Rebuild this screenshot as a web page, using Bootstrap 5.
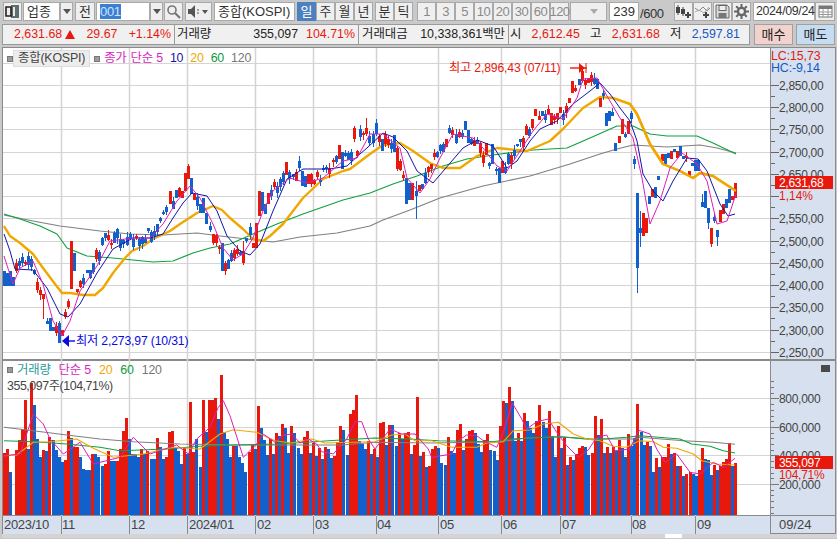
<!DOCTYPE html>
<html lang="ko">
<head>
<meta charset="utf-8">
<title>종합(KOSPI)</title>
<link href="https://cdn.jsdelivr.net/npm/bootstrap@5.3.0/dist/css/bootstrap.min.css" rel="stylesheet">
<style>
html,body{height:539px;overflow:hidden}
body{background:#c9c9c9;font-family:"Liberation Sans","Noto Sans CJK KR",sans-serif;font-size:12px;color:#222;line-height:1}
.tbar{height:24px;padding:2px 0 0 3px}
.tb{height:19px;border:1px solid #a9a9a9;border-radius:0;padding:0;background:#efefef;font-size:13px;line-height:15px;color:#333;display:flex;align-items:center;justify-content:center;flex:none}
.tbar .btn-group>.tb.tb:not(:first-child){margin-left:0}
.tb.off{color:#8a8a8a;letter-spacing:-.5px}
.tb.on{background:#4c80bf;color:#fff;border-color:#4c80bf}
.fld{height:19px;border:1px solid #a9a9a9;border-radius:0;padding:0 3px;background:#fff;font-size:13px;color:#333;flex:none;display:flex;align-items:center}
.dte{font-size:12.4px;letter-spacing:-.35px;padding:0 2px;white-space:nowrap}
.sel{background:#3b7fd0;color:#cfe2ff;padding:1px 0;letter-spacing:-.3px}
.arw{width:0;height:0;border-left:4px solid transparent;border-right:4px solid transparent;border-top:5px solid #555}
.arw.dim{border-top-color:#aaa}
.wd13{width:13px}.wd19{width:19px}.wd20{width:20px}.wd27{width:27px}.wd30{width:30px}.wd37{width:37px}.wd54{width:54px}.wd62{width:62px}.wd81{width:81px}
.mg1{margin-left:1px}.mg2{margin-left:2px}.mg4{margin-left:4px}.mg10{margin-left:10px}
.slash{width:24px;margin-left:1px;font-size:13px;color:#333;align-self:center;letter-spacing:-.4px}
.ibar{height:22px;padding-left:2px}
.ibox{width:748px;background:#f0f0f0;border:1px solid #9a9a9a;height:21px;align-items:center;font-size:12.4px}
.icell{height:100%;border-right:1px solid #9a9a9a;align-items:center;flex:none}
.ic1{width:172px;padding:0 3px 0 11px}
.ic2{width:184px;padding:0 3px 0 2px}
.ic3{width:150px;padding:0 3px 0 3px}
.ic4{flex:1;padding:0 9px 0 1px;display:flex;justify-content:space-between;border-right:0}
.red{color:#e8190c}.blu{color:#1458c8}
.tri{width:0;height:0;border-left:5px solid transparent;border-right:5px solid transparent;border-bottom:9px solid #e8190c;margin-left:3px}
.trade{width:39px;height:21px;font-size:13px;border:1px solid #a0a0a0;border-radius:0;padding:0;flex:none;color:#222;line-height:19px}
.buy{background:#f3d2cd;margin-left:4px}
.sell{background:#c6dcf1;margin-left:3px}
.trade:hover{color:#222}
.chartw{margin:1px 1px 0 2px;border:1px solid #8a8a8a;border-bottom:0}
.prow{display:flex}
.plot{position:relative;width:767px;background:#fff;flex:none}
.plot svg,.axs svg{display:block}
.axs{width:64px;background:#d6e0ee;border-left:1px solid #8a8a8a;flex:none;box-sizing:content-box;position:relative}
.hmain{height:313px}.hvol{height:155px}.hx{height:18px}
.rule{border-bottom:2px solid #8a8a8a}
.rule1{border-bottom:1px solid #8a8a8a}
.legd{position:absolute;left:4px;top:3px;height:15px;align-items:center;font-size:12.4px;letter-spacing:-.2px}
.sq{width:6px;height:6px;background:#9c9c9c;border:1px solid #777;display:block;flex:none}
.nmt{background:#ededed;border:1px solid #dcdcdc;padding:1px 4px;margin:0 4px 0 0;color:#444}
.c-mg{color:#d81ec0}.c-nv{color:#1414a8}.c-or{color:#f0a800}.c-gr{color:#0e9a3a}.c-gy{color:#777}.c-te{color:#2a9a9a}
.lg-sp{margin-left:7px}
.vleg{position:absolute;left:4px;top:3px;font-size:12.4px;letter-spacing:-.2px}
.vleg .lg-sp{margin-left:8px}
.vl2{margin:4px 0 0 0;color:#444;letter-spacing:-.45px}
.clo{position:absolute;right:5px;top:4px;width:9px;height:7px;background:#4a4a4a}
.tabs{height:4px;background:#d4d4d4;margin-left:2px}
.tabw{width:17px;height:4px;background:#fff;margin-left:663px}
text{font-family:"Liberation Sans","Noto Sans CJK KR",sans-serif}
</style>
</head>
<body>
<div class="d-flex tbar">
  <button class="btn tb wd19"><svg width="15" height="15" viewBox="0 0 15 15"><rect x="6" y="1" width="8" height="13" fill="#5e6e6e"/><path d="M1 3h5v9H1z" fill="none" stroke="#222" stroke-width="1.6"/><rect x="8" y="3" width="2" height="9" fill="#e8e8e8"/></svg></button>
  <div class="fld wd37 mg1">업종</div>
  <button class="btn tb wd13"><span class="arw"></span></button>
  <button class="btn tb wd20 mg2">전</button>
  <div class="fld wd54 mg1"><span class="sel">001</span></div>
  <button class="btn tb wd13"><span class="arw"></span></button>
  <button class="btn tb wd19 mg1"><svg width="15" height="15" viewBox="0 0 15 15"><circle cx="6" cy="6" r="4" fill="none" stroke="#777" stroke-width="1.6"/><path d="M9 9l5 5" stroke="#777" stroke-width="2.2"/></svg></button>
  <button class="btn tb wd27 mg2"><svg width="23" height="13" viewBox="0 0 23 13"><path d="M1 4h3l4-4v13l-4-4H1z" fill="#555"/><path d="M10 5h2M10 8h2" stroke="#555"/><path d="M15 5h6l-3 4z" fill="#555"/></svg></button>
  <div class="fld wd81 mg2">종합(KOSPI)</div>
  <div class="btn-group mg2" role="group">
    <button class="btn tb wd19 on">일</button><button class="btn tb wd19">주</button><button class="btn tb wd19">월</button><button class="btn tb wd19">년</button>
  </div>
  <div class="btn-group mg2" role="group">
    <button class="btn tb wd19">분</button><button class="btn tb wd19">틱</button>
  </div>
  <div class="btn-group mg4" role="group">
    <button class="btn tb wd19 off">1</button><button class="btn tb wd19 off">3</button><button class="btn tb wd19 off">5</button><button class="btn tb wd19 off">10</button><button class="btn tb wd19 off">20</button><button class="btn tb wd19 off">30</button><button class="btn tb wd19 off">60</button><button class="btn tb wd19 off">120</button>
  </div>
  <button class="btn tb wd37 mg1 justify-content-end pe-2"><span class="arw dim"></span></button>
  <div class="fld wd30 mg2 justify-content-end">239</div>
  <span class="slash">/600</span>
  <button class="btn tb wd19 mg10"><svg width="17" height="15" viewBox="0 0 17 15"><path d="M3 1v10M8 3v9" stroke="#444"/><rect x="1" y="3" width="4" height="6" fill="#444"/><rect x="6" y="5" width="4" height="5" fill="#444"/><path d="M13 8v6M10 11h6" stroke="#444" stroke-width="2"/></svg></button>
  <button class="btn tb wd19"><svg width="17" height="15" viewBox="0 0 17 15"><path d="M1 4l4 3 4-4 4 4 3-3" fill="none" stroke="#888"/><path d="M1 8l4-2 5 3 5-6" fill="none" stroke="#aaa"/><path d="M12 8v6M9 11h6" stroke="#444" stroke-width="2"/></svg></button>
  <button class="btn tb wd19 mg1"><svg width="15" height="15" viewBox="0 0 15 15"><path d="M1 1h11l2 2v11H1z" fill="#ddd" stroke="#666"/><rect x="4" y="1.5" width="7" height="5" fill="#eee" stroke="#666"/><rect x="3.5" y="9" width="8" height="5" fill="#777"/></svg></button>
  <button class="btn tb wd19"><svg width="15" height="15" viewBox="0 0 15 15"><circle cx="7.5" cy="7.5" r="3.6" fill="none" stroke="#666" stroke-width="2.4"/><path d="M7.5 0v3M7.5 12v3M0 7.5h3M12 7.5h3M2.2 2.2l2 2M10.8 10.8l2 2M2.2 12.8l2-2M10.8 4.200l2-2" stroke="#666" stroke-width="2"/></svg></button>
  <div class="fld wd62 mg2 dte">2024/09/24</div>
  <button class="btn tb wd20"><svg width="15" height="13" viewBox="0 0 15 13"><rect x="1" y="1" width="13" height="11" fill="#fff" stroke="#777"/><rect x="1" y="1" width="13" height="3" fill="#777"/><path d="M1 7h13M1 9.500h13M5 4v8M10 4v8" stroke="#999"/></svg></button>
</div>

<div class="d-flex ibar">
  <div class="d-flex ibox">
    <div class="d-flex icell ic1 justify-content-between"><span class="d-flex align-items-center red">2,631.68<i class="tri"></i></span><span class="red">29.67</span><span class="red">+1.14%</span></div>
    <div class="d-flex icell ic2"><span>거래량</span><span class="ms-auto">355,097</span><span class="red ms-2">104.71%</span></div>
    <div class="d-flex icell ic3"><span>거래대금</span><span class="ms-auto">10,338,361백만</span></div>
    <div class="d-flex icell ic4"><span>시</span><span class="red">2,612.45</span><span>고</span><span class="red">2,631.68</span><span>저</span><span class="blu">2,597.81</span></div>
  </div>
  <button class="btn trade buy">매수</button>
  <button class="btn trade sell">매도</button>
</div>

<div class="chartw">
  <div class="prow hmain rule">
    <div class="plot">
      <svg id="main" width="767" height="313" viewBox="3 47 767 313"></svg>
      <div class="d-flex legd"><i class="sq"></i><span class="nmt">종합(KOSPI)</span><i class="sq"></i><span class="c-mg ms-1">종가</span><span class="c-mg lg-sp ms-1">단순 5</span><span class="c-nv lg-sp">10</span><span class="c-or lg-sp">20</span><span class="c-gr lg-sp">60</span><span class="c-gy lg-sp">120</span></div>
    </div>
    <div class="axs"><svg id="maxis" width="64" height="313" viewBox="771 47 64 313"></svg></div>
  </div>
  <div class="prow hvol rule1">
    <div class="plot">
      <svg id="vol" width="767" height="155" viewBox="3 362 767 155"></svg>
      <div class="vleg"><div class="d-flex align-items-center"><i class="sq"></i><span class="c-te ms-1">거래량</span><span class="c-mg lg-sp">단순 5</span><span class="c-or lg-sp">20</span><span class="c-gr lg-sp">60</span><span class="c-gy lg-sp">120</span></div><div class="vl2">355,097주(104,71%)</div></div>
    </div>
    <div class="axs"><svg id="vaxis" width="64" height="155" viewBox="771 362 64 155"></svg><i class="clo"></i></div>
  </div>
  <div class="prow hx rule1">
    <div class="plot axbg"><svg id="xax" width="767" height="18" viewBox="3 518 767 18"></svg></div>
    <div class="axs"><svg width="64" height="18" viewBox="771 518 64 18"><text x="779" y="531" font-size="13" fill="#444">09/24</text></svg></div>
  </div>
</div>
<div class="tabs"><div class="tabw"></div></div>

<script>
const grid=[61,129,187,255,313,376,438,501,560,631,695];
const months=[[4,'2023/10'],[62,'11'],[131,'12'],[189,'2024/01'],[257,'02'],[315,'03'],[377,'04'],[440,'05'],[503,'06'],[562,'07'],[632,'08'],[697,'09']];
const priceY=p=>84+(2850-p)*0.4446;
const ma20=[[4,225],[10,235],[20,242],[33,253],[43,267],[55,283],[62,292],[70,292],[83,294],[95,294],[103,287],[113,272],[125,257],[132,250],[143,245],[153,238],[170,230],[180,223],[197,212],[213,205],[222,209],[230,217],[243,228],[253,238],[263,240],[270,235],[283,223],[303,197],[323,178],[343,170],[350,168],[370,153],[383,144],[400,142],[413,150],[430,162],[443,167],[460,167],[477,155],[497,147],[527,150],[550,140],[563,128],[583,107],[600,96],[613,97],[630,103],[637,113],[650,143],[663,163],[680,170],[693,177],[700,172],[713,175],[736,190]];
const ma10=[[4,233],[10,250],[15,268],[33,269],[47,287],[60,313],[68,316],[80,303],[97,272],[113,248],[133,237],[150,237],[163,233],[173,217],[183,202],[192,192],[207,195],[217,210],[227,235],[240,250],[250,254],[260,243],[273,210],[287,178],[303,168],[330,168],[347,165],[360,153],[367,147],[383,132],[393,136],[407,150],[417,170],[433,182],[463,147],[477,139],[493,145],[507,167],[517,160],[530,140],[540,128],[557,120],[573,103],[590,90],[600,82],[610,93],[620,107],[630,120],[637,140],[643,173],[653,190],[663,200],[673,180],[687,157],[698,158],[707,170],[720,203],[728,215],[735,213]];
const ma5=[[4,255],[13,283],[20,267],[33,260],[43,283],[53,320],[62,335],[70,320],[80,290],[97,265],[110,240],[133,237],[150,237],[163,223],[177,200],[190,185],[200,197],[213,223],[223,247],[233,259],[243,253],[253,237],[263,210],[273,190],[290,177],[307,182],[323,177],[343,160],[357,157],[370,133],[383,133],[400,147],[407,177],[420,192],[430,178],[440,157],[453,133],[473,137],[483,147],[497,165],[507,170],[520,150],[533,130],[547,113],[563,118],[577,97],[583,78],[597,77],[607,95],[620,117],[633,137],[642,177],[650,223],[660,200],[670,167],[682,152],[697,163],[707,180],[717,223],[727,220],[736,193]];
const ma60=[[4,213],[20,218],[40,225],[57,233],[67,247],[87,255],[113,257],[133,259],[153,261],[173,260],[193,252],[210,247],[230,243],[253,233],[277,223],[303,213],[343,199],[370,192],[393,183],[417,175],[443,165],[467,158],[500,153],[533,149],[567,147],[590,137],[617,125],[633,125],[650,133],[667,135],[697,135],[713,142],[736,153]];
const ma120=[[4,214],[33,220],[60,225],[100,230],[130,233],[163,234],[197,232],[220,235],[247,238],[273,241],[300,236],[337,232],[370,225],[383,219],[410,209],[440,197],[483,185],[530,175],[570,163],[600,153],[617,148],[633,144],[667,146],[700,144],[717,147],[736,152]];
const interp=(pl,x)=>{if(x<=pl[0][0])return pl[0][1];for(let i=1;i<pl.length;i++){if(x<=pl[i][0]){const a=pl[i-1],b=pl[i];return a[1]+(b[1]-a[1])*(x-a[0])/(b[0]-a[0]);}}return pl[pl.length-1][1];};
const pts=pl=>pl.map(p=>p.join(',')).join(' ');
const line=(pl,c,w)=>`<polyline points="${pts(pl)}" fill="none" stroke="${c}" stroke-width="${w}" stroke-linejoin="round"/>`;
const RED='#e8190c',BLUE='#1260cc',GRID='#d4d4d4';
let s=0x2F6E2B1;const rnd=()=>{s|=0;s=s+0x6D2B79F5|0;let t=Math.imul(s^s>>>15,1|s);t=t+Math.imul(t^t>>>7,61|t)^t;return((t^t>>>14)>>>0)/4294967296;};
const xOf=i=>Math.floor(3+3.075*i);
const N=239,cd=[];
for(let i=0;i<N;i++){const x=xOf(i)+1,c=interp(ma5,x+5)+(rnd()-.5)*11,h=2+rnd()*8;const up=rnd()<.5;
 cd.push({c:up?'r':'b',t:c-h/2,b:c+h/2,wt:c-h/2-rnd()*5,wb:c+h/2+rnd()*5});}
const ov=[[5,'b',270,285],[8,'b',272,285],[11,'b',270,285],[14,'b',276,285],[16,'r',262,270,258,272],[44,'r',293,298,293,318],[50,'b',317,330],[53,'b',326,330],[59,'b',322,342,320,342],[62,'r',329,335],[65,'r',311,316,308,318],[68,'r',300,306,298,308],[71,'r',240,288],[75,'b',252,270],[171,'r',190,203],[177,'b',189,197],[182,'r',190,197],[185,'r',172,190],[188,'r',165,178,163,178],[192,'b',177,193],[202,'b',203,212],[204,'b',197,212],[207,'b',212,223],[223,'b',242,270],[225,'r',262,270,260,274],[245,'r',250,262,240,264],[254,'r',242,247],[257,'r',222,247],[259,'r',190,215],[262,'b',191,210],[266,'b',203,213],[268,'r',192,203],[287,'r',161,174],[299,'b',160,167,155,170],[303,'b',170,185],[306,'b',175,186],[308,'r',173,183],[339,'r',144,158],[342,'b',151,168],[355,'r',127,138,125,141],[361,'b',128,136,124,140],[367,'r',127,133,117,135],[377,'b',122,133,118,135],[382,'b',138,150],[396,'b',134,151],[399,'r',147,168,145,170],[407,'b',177,203],[410,'b',182,199],[413,'r',182,199],[417,'b',190,195,180,218],[419,'r',184,190],[423,'b',183,188],[448,'r',138,146],[466,'b',120,129],[468,'b',129,142],[487,'r',142,154],[493,'b',143,163],[498,'b',167,182],[502,'r',160,172],[537,'r',108,115],[542,'b',110,115],[552,'r',112,124],[560,'r',106,112],[570,'r',97,102],[573,'r',80,92],[579,'b',78,84],[581,'r',70,80,65,82],[598,'b',78,88],[601,'r',97,106],[608,'b',112,125],[611,'b',110,120],[617,'b',142,150],[619,'r',135,142],[623,'r',118,133],[629,'r',120,133],[632,'b',112,118,110,122],[636,'b',152,163,150,167],[638,'b',192,267,192,292],[642,'b',227,232,210,246],[645,'r',212,235],[647,'r',217,232],[651,'b',195,203],[653,'r',188,196],[656,'b',186,197],[659,'b',175,179],[662,'r',153,160],[665,'b',153,163],[668,'b',152,157],[672,'r',150,158],[675,'b',148,151],[678,'r',150,157],[682,'b',145,155],[685,'b',155,158],[691,'r',170,175],[694,'b',162,165],[697,'b',159,170],[699,'b',159,170],[702,'b',201,206,193,206],[706,'b',190,207],[709,'b',207,222,207,228],[712,'r',227,243,227,246],[716,'b',223,232],[718,'b',229,236,229,245],[721,'r',209,221],[724,'r',203,213],[727,'b',198,207],[730,'b',188,202],[733,'r',195,199],[736,'r',182,197]];
ov.forEach(o=>{const i=Math.max(0,Math.min(N-1,Math.round((o[0]-4)/3.075)));cd[i]={c:o[1],t:o[2],b:o[3],wt:o[4]??o[2],wb:o[5]??o[3]};});
let m='';
for(let p=2250;p<=2900;p+=50){const y=Math.round(priceY(p))+.5;m+=`<path d="M3 ${y}H770" stroke="${GRID}"/>`;}
grid.forEach(x=>m+=`<path d="M${x+.5} 47V360" stroke="${GRID}" stroke-width="1.5"/>`);
m+=line(ma120,'#808080',1.2)+line(ma60,'#12a040',1.2)+line(ma20,'#f0a800',2.4);
let cs='';cd.forEach((k,i)=>{const x=xOf(i),col=k.c=='r'?RED:BLUE;cs+=`<rect x="${x+1}" y="${k.wt.toFixed(0)}" width="1" height="${(k.wb-k.wt).toFixed(0)}" fill="${col}"/><rect x="${x}" y="${k.t.toFixed(0)}" width="3" height="${Math.max(1,k.b-k.t).toFixed(0)}" fill="${col}"/>`;});
m+=`<g shape-rendering="crispEdges">${cs}</g>`;
m+=line(ma20.filter(p=>p[0]>620),'#f0a800',2.4)+line(ma10,'#1414a8',1)+line(ma5,'#dc20b8',1);
m+=`<text x="449" y="71" font-size="12.2" fill="${RED}" letter-spacing="-.15">최고 2,896,43 (07/11)</text><path d="M570 67h17" stroke="${RED}" stroke-width="1.4"/><path d="M579 62l6 5-6 5z" fill="${RED}"/><path d="M586 62v10" stroke="${RED}"/>`;
m+=`<path d="M64 340h11" stroke="#0a0ae0" stroke-width="1.4"/><path d="M62 340l7-6v12z" fill="#0a0ae0"/><text x="76" y="344" font-size="12.2" fill="#0a0ae0" letter-spacing="-.15">최저 2,273,97 (10/31)</text>`;
document.getElementById('main').innerHTML=m;

let a='';
for(let p=2250;p<=2850;p+=25){const y=Math.round(priceY(p))+.5;a+=`<path d="M771 ${y}h${p%50?4:8}" stroke="#666"/>`;
 if(p%50==0&&p!=2600)a+=`<text x="779" y="${y+4.5}" font-size="12" fill="#444" letter-spacing="-.3">${(p).toLocaleString('en-US')},00</text>`;}
a+=`<text x="771" y="59" font-size="12.4" fill="${RED}" letter-spacing="-.1">LC:15,73</text><text x="771" y="71" font-size="12.4" fill="#1458c8" letter-spacing="-.1">HC:-9,14</text>`;
a+=`<rect x="775" y="175" width="58" height="13" fill="${RED}"/><text x="779" y="186" font-size="12" fill="#fff" letter-spacing="-.3">2,631,68</text><text x="779" y="199" font-size="12" fill="${RED}">1,14%</text>`;
document.getElementById('maxis').innerHTML=a;

const segs=[[360,'r282 r270 b340 x0 r272 r243 r210 r123 b270 r72 b138 b240 b293 r272 b275 r235 b243 b272 b293 b308 r303 r215 b238 r265 r263 b293 b330 b333 b333 r285 b285 b295 b322 r315 r275 b305 b305 r305 r270 r215 r177 b240 b285 b285 b295 r270 b285 r275 b300 b300 r237 b265 b300 r293 r218 r215 b265 b275 b315 r265 b285 r130 r280 b240 b325 r123 b218 r123 r123 r118 b180 r48 b218 b240 b295 r260 b260 b293 b312 b340 r278 r258 b270 r140 b208 b243 b288 r240 b285 r222 b230'],
[370,'r165 b177 b252 r170 b192 b237 b255 r204 r185 b252 r222 b260 r237 b270 r234 b240 b267 r262 r220 r170 b183 b258 r135 r123 r78 b215 b225 b240 r215 b255 r240 b264 r162 r158 b228 r168 b168 b230 r192 b210 r192 r188 b255 r228 r84 b261 r249 b294 r291 r240 r231 b237 b282 b288 r204 b246 b252 r183 r165'],
[370,'b243 r210 r186 r183 b192 b225 b249 r213 r195 b243 b246 b273 r171 r96 b102 r54 b96 b216 r192 b216 r132 b156 b177 b192 r156 r108 b160 b177 r126 b200 b264 r171 b237 r204 b288 r264 b273 r255 r237 r231 b234 b258 r252 r141 b198 r150 b252 r234 b252 r234 b246 r213 b237 b264 r195 b231 b207 r105'],
[360,'b218 b258 r250 b260 b338 r298 b323 r295 r293 r255 b285 r283 b320 r320 b350 r345 r340 b345 b350 r333 r267 b300 b303 b348 r318 b333 r320 r310 r300 r252 b320 r312']];
let bars=[];segs.forEach(([y0,str])=>str.split(' ').forEach(t=>bars.push({c:t[0],y:y0+(+t.slice(1))/3})));
const vstep=(738-3)/bars.length;
let v='';
[399,428,456,485].forEach(y=>v+=`<path d="M3 ${y+.5}H770" stroke="${GRID}"/>`);
grid.forEach(x=>v+=`<path d="M${x+.5} 362V517" stroke="${GRID}" stroke-width="1.5"/>`);
let b='';bars.forEach((k,i)=>{if(k.c=='x')return;const x=Math.floor(3+vstep*i);b+=`<rect x="${x}" y="${k.y.toFixed(0)}" width="3" height="${(516-k.y).toFixed(0)}" fill="${k.c=='r'?RED:BLUE}"/>`;});
v+=`<g shape-rendering="crispEdges">${b}</g>`;
const Z=(x0,y0,l)=>l.map(p=>[+(x0+p[0]/3).toFixed(1),+(y0+p[1]/3).toFixed(1)]);
const vm=[...Z(0,360,[[12,290],[60,285],[100,165],[130,195],[150,240],[190,285],[240,250],[280,315],[360,295],[400,235],[450,285],[530,258],[565,285],[590,240],[630,205],[655,145],[670,125],[690,170],[730,295],[770,255],[790,225],[825,250]]),...Z(275,370,[[20,200],[50,195],[75,222],[100,210],[125,225],[140,248],[175,255],[215,210],[240,158],[260,158],[280,210],[300,240],[345,180],[380,195],[420,195],[460,240],[470,265],[530,255],[550,215]]),...Z(460,370,[[20,198],[50,200],[70,215],[110,235],[130,190],[157,102],[185,150],[200,180],[230,158],[265,150],[290,190],[320,230],[355,265],[385,243],[410,205],[440,198],[465,245],[510,240],[535,185]]),...Z(640,360,[[0,215],[30,225],[50,270],[75,310],[110,285],[150,340],[180,345],[220,310],[250,325],[285,298]])];
const vo=[...Z(0,360,[[12,290],[50,288],[100,250],[150,248],[230,240],[280,268],[340,295],[430,285],[520,265],[600,270],[660,225],[700,212],[770,220],[825,245]]),...Z(275,370,[[50,222],[110,210],[150,222],[230,220],[300,218],[350,198],[390,195],[420,215],[470,215],[530,235]]),...Z(460,370,[[50,235],[80,222],[130,218],[160,185],[210,183],[250,165],[295,160],[340,195],[380,210],[420,215],[460,232],[500,235],[535,217]]),...Z(640,360,[[0,245],[40,248],[70,265],[110,268],[160,285],[185,305],[230,315],[285,318]])];
const vg=[...Z(0,360,[[12,245],[100,248],[200,255],[300,265],[360,275],[500,270],[600,262],[700,258],[825,255]]),...Z(275,370,[[100,220],[160,215],[300,207],[400,210],[490,215]]),...Z(460,370,[[100,218],[150,210],[300,203],[400,212],[500,205]]),...Z(640,360,[[0,230],[120,240],[155,255],[210,262],[250,275],[285,282]])];
const vy=[...Z(0,360,[[12,205],[100,215],[200,228],[300,240],[400,248],[540,255],[700,258],[825,258]]),...Z(275,370,[[200,228],[300,220],[470,222]]),...Z(460,370,[[120,218],[200,207],[300,203],[400,210],[530,210]]),...Z(640,360,[[0,235],[130,245],[220,250],[285,256]])];
v+=line(vy,'#808080',1.1)+line(vg,'#12a040',1.1)+line(vo,'#f0a800',1.1)+line(vm,'#dc20b8',1);
document.getElementById('vol').innerHTML=v;

let w='';
for(let val=0;val<=1000000;val+=40000){const y=Math.round(513.5-val*0.0001426)+.5;if(y<380)break;const maj=val%200000==0&&val>0;w+=`<path d="M771 ${y}h${maj?8:3}" stroke="#777"/>`;}
[['800,000',399],['600,000',428],['400,000',456],['200,000',485]].forEach(([t,y])=>w+=`<text x="779" y="${y+4.5}" font-size="12" fill="#444" letter-spacing="-.3">${t}</text>`);
w+=`<rect x="775" y="457" width="58" height="13" fill="${RED}"/><text x="779" y="468" font-size="12" fill="#fff" letter-spacing="-.3">355,097</text><text x="779" y="480" font-size="12" fill="${RED}" letter-spacing="-.3">104,71%</text>`;
document.getElementById('vaxis').innerHTML=w;

let xa=`<rect x="3" y="518" width="767" height="18" fill="#d6e0ee"/>`;
grid.forEach(x=>xa+=`<path d="M${x+.5} 518v18" stroke="#8a8a8a"/>`);
months.forEach(([x,t])=>xa+=`<text x="${x}" y="531" font-size="13" fill="#444" letter-spacing="-.3">${t}</text>`);
document.getElementById('xax').innerHTML=xa;
</script>
<script src="https://cdn.jsdelivr.net/npm/bootstrap@5.3.0/dist/js/bootstrap.bundle.min.js"></script>
</body>
</html>
